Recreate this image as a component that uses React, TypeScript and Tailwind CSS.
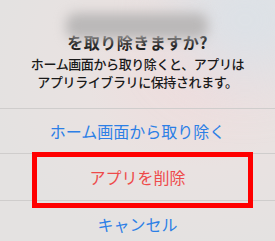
import React from 'react';

const font = { fontFamily: '"Noto Sans CJK JP", "Noto Sans", sans-serif' };

function ActionRow({ label, tone, height }: { label: string; tone: 'blue' | 'red'; height: string }) {
  return (
    <div className={`flex items-center justify-center border-t border-[#cfcdcc] ${height}`}>
      <span
        className={
          tone === 'red'
            ? 'text-[16px] leading-none text-[#ee4a4a]'
            : 'text-[16px] leading-none text-[#2c7fe6]'
        }
      >
        {label}
      </span>
    </div>
  );
}

export default function App() {
  return (
    <div
      className="relative flex h-[241px] w-[275px] flex-col gap-[17px] overflow-hidden bg-[#e6e4e3] bg-[radial-gradient(ellipse_at_72%_30%,#f0dcdc_0%,#e9e2e1_40%,#e4e2e1_75%)] pt-[32px]"
      style={font}
    >
      {/* bluish tint top right */}
      <div className="pointer-events-none absolute right-[-40px] top-[-40px] h-[120px] w-[140px] rounded-full bg-[#d6e2ea] opacity-70 blur-[30px]" />

      {/* Dialog text */}
      <div className="relative flex flex-col items-center gap-[3px] text-center">
        <div className="text-[16px] font-bold leading-[20px] tracking-[0.5px] text-[#1c1c1c]">
          を取り除きますか?
        </div>
        <div className="flex flex-col text-[13px] font-medium leading-[18px] tracking-[-0.4px] text-[#1a1a1a]">
          <span>ホーム画面から取り除くと、アプリは</span>
          <span>アプリライブラリに保持されます。</span>
        </div>
      </div>

      {/* blurred app name */}
      <div className="pointer-events-none absolute left-[66px] top-[13px] h-[26px] w-[142px] rounded-[10px] bg-[#bab8b8] blur-[6px]" />

      {/* Actions */}
      <div className="relative flex flex-col">
        <ActionRow label="ホーム画面から取り除く" tone="blue" height="h-[45px]" />
        <ActionRow label="アプリを削除" tone="red" height="h-[47px]" />
        <ActionRow label="キャンセル" tone="blue" height="h-[47px]" />
      </div>

      {/* red highlight annotation */}
      <div className="pointer-events-none absolute left-[32px] top-[152px] h-[56px] w-[221px] border-[5px] border-[#ff0000]" />
    </div>
  );
}
